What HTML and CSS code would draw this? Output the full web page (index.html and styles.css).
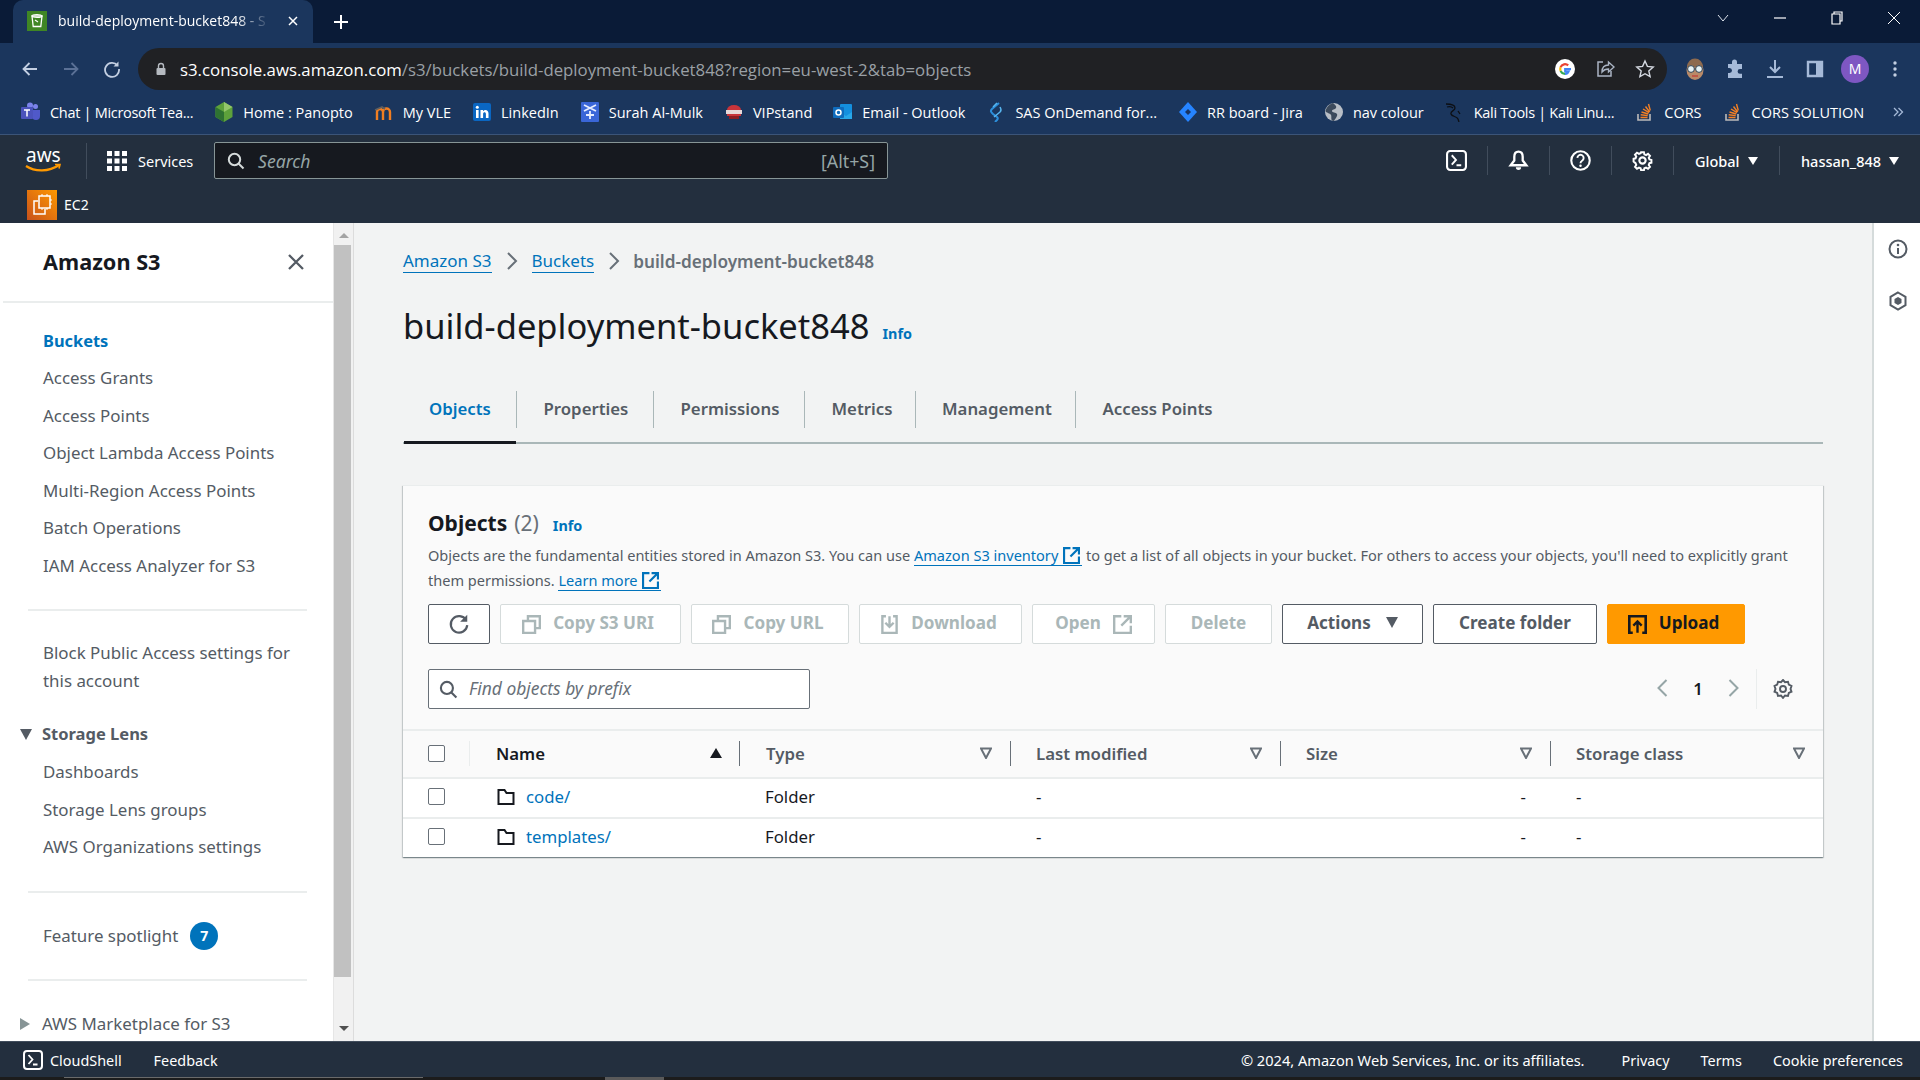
FILE: index.html
```html
<!DOCTYPE html>
<html lang="en">
<head>
  <meta charset="UTF-8">
  <title>build-deployment-bucket848 - S3 bucket</title>
  <link rel="stylesheet" href="styles.css">
</head>
<body>
  <!-- Browser tab strip -->
  <div class="tabstrip">
    <div class="tab-active">
      <svg class="tab-favicon" viewBox="0 0 20 20"><rect width="20" height="20" fill="#3f8624"/><path d="M5 5h10l-1.2 10.5H6.200z" fill="none" stroke="#fff" stroke-width="1.300"/><ellipse cx="10" cy="5" rx="5" ry="1.500" fill="none" stroke="#fff" stroke-width="1.100"/><path d="M8 9l3 2" stroke="#fff" stroke-width="1.200"/></svg>
      <span class="tab-title">build-deployment-bucket848 - S</span>
      <svg class="tab-close" viewBox="0 0 12 12"><path d="M2 2l8 8M10 2l-8 8" stroke="#fff" stroke-width="1.500"/></svg>
    </div>
    <svg class="tab-new" viewBox="0 0 16 16"><path d="M8 1v14M1 8h14" stroke="#fff" stroke-width="2"/></svg>
    <div class="window-controls">
      <svg viewBox="0 0 14 14"><path d="M2 4l5 6 5-6" fill="none" stroke="#dfe5ee" stroke-width="1"/></svg>
      <svg viewBox="0 0 14 14"><path d="M1 7h12" stroke="#fff" stroke-width="1.200"/></svg>
      <svg viewBox="0 0 14 14"><path d="M4 3V1h8v9h-2M2 3h8v10H2z" fill="none" stroke="#fff" stroke-width="1.200"/></svg>
      <svg viewBox="0 0 14 14"><path d="M1 1l12 12M13 1L1 13" stroke="#fff" stroke-width="1"/></svg>
    </div>
  </div>

  <!-- Address bar -->
  <div class="toolbar">
    <div class="nav-buttons">
      <svg viewBox="0 0 18 18"><path d="M16 9H3M8.500 3L2.500 9l6 6" fill="none" stroke="#c3cfe2" stroke-width="1.800"/></svg>
      <svg viewBox="0 0 18 18"><path d="M2 9h13M9.500 3l6 6-6 6" fill="none" stroke="#5b7196" stroke-width="1.800"/></svg>
      <svg viewBox="0 0 18 18"><path d="M14.500 5.500A7 7 0 1 0 16 9" fill="none" stroke="#c3cfe2" stroke-width="1.800"/><path d="M15.500 1.500v5h-5z" fill="#c3cfe2"/></svg>
    </div>
    <div class="urlbar">
      <svg class="lock" viewBox="0 0 12 14"><path d="M3.500 6V4a2.500 2.500 0 0 1 5 0v2" fill="none" stroke="#b5bac0" stroke-width="1.400"/><rect x="1.500" y="6" width="9" height="7" rx="1" fill="#b5bac0"/></svg>
      <span class="url-text"><span class="url-host">s3.console.aws.amazon.com</span>/s3/buckets/build-deployment-bucket848?region=eu-west-2&amp;tab=objects</span>
      <div class="url-icons">
        <svg viewBox="0 0 20 20"><circle cx="10" cy="10" r="10" fill="#fff"/><path d="M16 10.200H10.200v2.300h3.300a3.600 3.600 0 0 1-3.500 2.300" fill="none" stroke="#4285f4" stroke-width="2.200"/><path d="M10 14.800a4.800 4.800 0 0 1-4.400-2.900" fill="none" stroke="#34a853" stroke-width="2.200"/><path d="M5.600 11.900a4.900 4.900 0 0 1 0-3.800" fill="none" stroke="#fbbc05" stroke-width="2.200"/><path d="M5.600 8.100A4.800 4.800 0 0 1 13.200 6.400" fill="none" stroke="#ea4335" stroke-width="2.200"/></svg>
        <svg viewBox="0 0 20 20"><path d="M8 3H3v14h13v-5" fill="none" stroke="#aab4c4" stroke-width="1.500"/><path d="M7 13c0-5 3-7 6.500-7V3L19 8l-5.500 5V10C10.500 10 8.500 11 7 13z" fill="none" stroke="#aab4c4" stroke-width="1.400"/></svg>
        <svg viewBox="0 0 20 20"><path d="M10 2l2.400 5.400 5.800.6-4.400 3.900 1.300 5.700L10 14.700l-5.100 2.900 1.300-5.700L1.800 8l5.800-.6z" fill="none" stroke="#d5dae2" stroke-width="1.400"/></svg>
      </div>
    </div>
    <div class="ext-icons">
      <svg class="avatar" viewBox="0 0 20 24"><ellipse cx="10" cy="13" rx="8.500" ry="10" fill="#b98a68"/><path d="M2 10a8 8.500 0 0 1 16 0z" fill="#8e6a4e"/><circle cx="6" cy="12" r="3.400" fill="#e7f2f4" stroke="#30404f"/><circle cx="14" cy="12" r="3.400" fill="#e7f2f4" stroke="#30404f"/><path d="M7 19h6" stroke="#c2473d" stroke-width="1.500"/></svg>
      <svg viewBox="0 0 20 20"><path d="M7 3a2.500 2.500 0 0 1 5 0v2h5v5h-2a2.300 2.300 0 0 0 0 4.800h2V19H3v-5h1.500a2.500 2.500 0 0 0 0-5H3V5h4z" fill="#a6bad8"/></svg>
      <svg viewBox="0 0 20 20"><path d="M10 1v11M5 8l5 5 5-5M2 18h16" fill="none" stroke="#a6bad8" stroke-width="2"/></svg>
      <svg viewBox="0 0 20 20"><path d="M3 3h14v14H3z" fill="none" stroke="#a6bad8" stroke-width="2.400"/><path d="M11 3h6v14h-6z" fill="#a6bad8"/></svg>
      <div class="profile">M</div>
      <svg viewBox="0 0 20 20"><circle cx="10" cy="4" r="1.700" fill="#c3cfe2"/><circle cx="10" cy="10" r="1.700" fill="#c3cfe2"/><circle cx="10" cy="16" r="1.700" fill="#c3cfe2"/></svg>
    </div>
  </div>

  <!-- Bookmarks -->
  <div class="bookmarks">
    <a class="bookmark tight"><svg viewBox="0 0 20 20"><circle cx="14.500" cy="4.500" r="2.500" fill="#7b83eb"/><circle cx="9" cy="3.500" r="3" fill="#7b83eb"/><path d="M11 8h8v6a4 4 0 0 1-8 0z" fill="#5059c9"/><rect y="5" width="12" height="12" rx="1" fill="#4b53bc"/><path d="M3 8h6M6 8v6.500" stroke="#fff" stroke-width="1.500"/></svg>Chat | Microsoft Tea...</a>
    <a class="bookmark"><svg viewBox="0 0 20 20"><path d="M10 0l8.500 5v10L10 20l-8.500-5V5z" fill="#5da13b"/><path d="M10 0v10l8.500-5z" fill="#93c66a"/><path d="M10 10v10l-8.500-5V5z" fill="#2e7232"/></svg>Home : Panopto</a>
    <a class="bookmark"><svg viewBox="0 0 20 20"><path d="M3 18V10a3 3 0 0 1 6 0v8M9 10a3.500 3.500 0 0 1 7 0v8" fill="none" stroke="#f17e21" stroke-width="2.400"/><path d="M1 8l7-3 3 2" fill="none" stroke="#5c5f62" stroke-width="1.600"/></svg>My VLE</a>
    <a class="bookmark"><svg viewBox="0 0 20 20"><rect x="1" y="1" width="18" height="18" rx="2" fill="#0a66c2"/><rect x="4" y="8" width="2.600" height="8" fill="#fff"/><circle cx="5.300" cy="5.300" r="1.500" fill="#fff"/><path d="M8.500 16V8H11v1.200c1.800-2.200 5.500-1.600 5.500 2.300V16h-2.600v-4c0-2.200-2.800-2.200-2.800 0v4z" fill="#fff"/></svg>LinkedIn</a>
    <a class="bookmark"><svg viewBox="0 0 20 20"><rect x="1" y="0" width="18" height="20" rx="1" fill="#3a66d8"/><path d="M4 3l12 6M16 3L4 9M10 9v8M6 13h8" stroke="#e6edff" stroke-width="1.800"/></svg>Surah Al-Mulk</a>
    <a class="bookmark"><svg viewBox="0 0 20 20"><path d="M3 8a7 5 0 0 1 14 0v6H3z" fill="#c8343a"/><rect x="2" y="8" width="16" height="4" fill="#e7d9d9"/><path d="M5 14h10v3H5z" fill="#8c1d22"/></svg>VIPstand</a>
    <a class="bookmark"><svg viewBox="0 0 20 20"><rect x="7" y="2" width="12" height="15" rx="1" fill="#1490df"/><path d="M7 10l6 4 6-4v7H7z" fill="#28a8ea"/><rect y="5" width="11" height="11" rx="1" fill="#0f6cbd"/><circle cx="5.500" cy="10.500" r="2.500" fill="none" stroke="#fff" stroke-width="1.500"/></svg>Email - Outlook</a>
    <a class="bookmark"><svg viewBox="0 0 20 20"><path d="M13 1L6 7c-2 2-1 3 1 5l4 3c1 1 1 2 0 3l-2 2" fill="none" stroke="#2c8fdb" stroke-width="2"/><path d="M11 1L7 5M14 5c1 2 2 3 0 5l-6 5" fill="none" stroke="#57b5ee" stroke-width="1.500"/></svg>SAS OnDemand for...</a>
    <a class="bookmark"><svg viewBox="0 0 20 20"><path d="M10 0l9 10-9 10-9-10z" fill="#2684ff"/><path d="M10 7l3 3-3 3-3-3z" fill="#19335f"/></svg>RR board - Jira</a>
    <a class="bookmark"><svg viewBox="0 0 20 20"><circle cx="10" cy="10" r="9" fill="#b8bec6"/><path d="M9 1c2 2 4 3 3 5S8 7 8 9s4 1 5 3-2 5-3 7c-4 0-2-4-3-6S2 11 1.500 9C3 4 6 2 9 1z" fill="#3c4a5c"/></svg>nav colour</a>
    <a class="bookmark tight"><svg viewBox="0 0 20 20"><path d="M1 2c5 0 9 1 9 4s-5 3-4 6 6 2 7 5l1 3M2 5c3-1 5 0 6 1M13 9l2 3" fill="none" stroke="#0c0f14" stroke-width="1.300"/></svg>Kali Tools | Kali Linu...</a>
    <a class="bookmark"><svg viewBox="0 0 20 20"><path d="M3 12v6h12v-6" fill="none" stroke="#bcbbbb" stroke-width="1.600"/><path d="M5.500 15.500h7M5.700 12.800l7 .8M6.500 10l6.800 2M8 7l6 3.600M10.500 4.500l4.200 5.500M13.500 2l1.800 6.500" stroke="#f48024" stroke-width="1.400"/></svg>CORS</a>
    <a class="bookmark"><svg viewBox="0 0 20 20"><path d="M3 12v6h12v-6" fill="none" stroke="#bcbbbb" stroke-width="1.600"/><path d="M5.500 15.500h7M5.700 12.800l7 .8M6.500 10l6.800 2M8 7l6 3.600M10.500 4.500l4.200 5.500M13.500 2l1.800 6.500" stroke="#f48024" stroke-width="1.400"/></svg>CORS SOLUTION</a>
    <svg class="more" viewBox="0 0 12 12"><path d="M2 2l4 4-4 4M6.500 2l4 4-4 4" fill="none" stroke="#a6bad8" stroke-width="1.300"/></svg>
  </div>

  <!-- AWS console header -->
  <header class="aws-header">
    <div class="aws-row">
      <div class="aws-logo">
        <svg viewBox="0 0 38 36"><text x="1" y="19" class="aws-word">aws</text><path d="M1 23c9 6 23 6 33-1" fill="none" stroke="#ff9900" stroke-width="2.200"/><path d="M30 21.500l5 0-1 4" fill="none" stroke="#ff9900" stroke-width="1.600"/></svg>
      </div>
      <div class="services">
        <svg viewBox="0 0 20 20"><g fill="#fff"><rect width="5" height="5"/><rect x="7.500" width="5" height="5"/><rect x="15" width="5" height="5"/><rect y="7.500" width="5" height="5"/><rect x="7.500" y="7.500" width="5" height="5"/><rect x="15" y="7.500" width="5" height="5"/><rect y="15" width="5" height="5"/><rect x="7.500" y="15" width="5" height="5"/><rect x="15" y="15" width="5" height="5"/></g></svg>
        <span>Services</span>
      </div>
      <div class="aws-search">
        <svg viewBox="0 0 18 18"><circle cx="7.500" cy="7.500" r="5.700" fill="none" stroke="#d5dbdb" stroke-width="2"/><path d="M11.500 11.500l5 5" stroke="#d5dbdb" stroke-width="2"/></svg>
        <span class="search-hint">Search</span>
        <span class="search-key">[Alt+S]</span>
      </div>
      <div class="aws-actions">
        <div class="aws-action">
          <svg viewBox="0 0 20 20"><rect x="1" y="1" width="18" height="18" rx="3" fill="none" stroke="#fff" stroke-width="2"/><path d="M5.500 5l4 4.500-4 4.500M10 14.500h4.500" fill="none" stroke="#fff" stroke-width="1.800"/></svg>
        </div>
        <div class="aws-action">
          <svg viewBox="0 0 20 20"><path d="M10 1.500c-3 0-4 2.500-4 5v3.500L2.500 14.500h15L14 10V6.500c0-2.500-1-5-4-5z" fill="none" stroke="#fff" stroke-width="2.200"/><path d="M7.500 16.500a2.500 2.500 0 0 0 5 0z" fill="#fff"/></svg>
        </div>
        <div class="aws-action">
          <svg viewBox="0 0 20 20"><circle cx="10" cy="10" r="8.800" fill="none" stroke="#fff" stroke-width="2"/><path d="M7 7.500a3 3 0 1 1 4.500 2.700c-1 .6-1.500 1-1.500 2.300" fill="none" stroke="#fff" stroke-width="1.800"/><circle cx="10" cy="15" r="1.200" fill="#fff"/></svg>
        </div>
        <div class="aws-action">
          <svg viewBox="0 0 20 20"><path d="M8.400 1h3.200l.5 2.500 1.900.8 2.200-1.400 2.200 2.200-1.400 2.200.8 1.900 2.200.5v3.200l-2.200.5-.8 1.900 1.400 2.200-2.200 2.200-2.200-1.400-1.900.8-.5 2.200H8.400l-.5-2.200-1.900-.8-2.200 1.400-2.200-2.200 1.400-2.200-.8-1.900L0 11.600V8.400l2.200-.5.8-1.900-1.400-2.200 2.200-2.200L6 3l1.900-.8z" transform="translate(1.500 1.200) scale(.85)" fill="none" stroke="#fff" stroke-width="2.200"/><circle cx="10" cy="10" r="3" fill="none" stroke="#fff" stroke-width="2"/></svg>
        </div>
        <div class="aws-menu region">Global<i class="caret-white"></i></div>
        <div class="aws-menu user">hassan_848<i class="caret-white"></i></div>
      </div>
    </div>
    <div class="aws-row-fav">
      <svg viewBox="0 0 30 30"><defs><linearGradient id="ec2" x1="0" y1="1" x2="1" y2="0"><stop offset="0" stop-color="#c8511b"/><stop offset="1" stop-color="#ff9900"/></linearGradient></defs><rect width="30" height="30" fill="url(#ec2)"/><rect x="12" y="6" width="11" height="12" fill="none" stroke="#fff" stroke-width="1.500"/><path d="M11 11H7v13h11v-5" fill="none" stroke="#fff" stroke-width="1.500"/><path d="M15 4v2M20 4v2M15 18v2M20 18v2M23 10h2M23 14h2" stroke="#fff" stroke-width="1"/></svg>
      <span>EC2</span>
    </div>
  </header>

  <div class="console">
    <!-- Side navigation -->
    <aside class="sidebar">
      <div class="side-head">
        <h2>Amazon S3</h2>
        <svg viewBox="0 0 18 18"><path d="M2 2l14 14M16 2L2 16" stroke="#545b64" stroke-width="2.300"/></svg>
      </div>
      <nav class="side-group first">
        <a class="active">Buckets</a>
        <a>Access Grants</a>
        <a>Access Points</a>
        <a>Object Lambda Access Points</a>
        <a>Multi-Region Access Points</a>
        <a>Batch Operations</a>
        <a>IAM Access Analyzer for S3</a>
      </nav>
      <hr class="side-rule rule-one">
      <a class="side-wrap">Block Public Access settings for this account</a>
      <div class="side-section">
        <i class="tri-down"></i>Storage Lens
      </div>
      <nav class="side-group">
        <a>Dashboards</a>
        <a>Storage Lens groups</a>
        <a>AWS Organizations settings</a>
      </nav>
      <hr class="side-rule rule-two">
      <div class="spotlight">Feature spotlight <span class="badge">7</span></div>
      <hr class="side-rule rule-three">
      <div class="side-section plain">
        <i class="tri-right"></i>AWS Marketplace for S3
      </div>
    </aside>
    <div class="side-scroll">
      <i class="arrow-up"></i>
      <div class="thumb"></div>
      <i class="arrow-down"></i>
    </div>

    <!-- Bucket page -->
    <main class="main">
      <div class="crumbs">
        <a>Amazon S3</a>
        <svg viewBox="0 0 12 20"><path d="M2 2l8 8-8 8" fill="none" stroke="#687078" stroke-width="2"/></svg>
        <a>Buckets</a>
        <svg viewBox="0 0 12 20"><path d="M2 2l8 8-8 8" fill="none" stroke="#687078" stroke-width="2"/></svg>
        <span>build-deployment-bucket848</span>
      </div>
      <div class="page-title">
        <h1>build-deployment-bucket848</h1>
        <a class="info">Info</a>
      </div>
      <div class="tabs">
        <a class="tab selected">Objects</a>
        <a class="tab">Properties</a>
        <a class="tab">Permissions</a>
        <a class="tab">Metrics</a>
        <a class="tab">Management</a>
        <a class="tab last">Access Points</a>
      </div>

      <section class="card">
        <div class="card-head">
          <div class="card-title">
            <h2>Objects</h2> <span class="count">(2)</span> <a class="info">Info</a>
          </div>
          <p class="card-desc">Objects are the fundamental entities stored in Amazon S3. You can use <a>Amazon S3 inventory <svg viewBox="0 0 16 16"><use href="#ext"/></svg></a> to get a list of all objects in your bucket. For others to access your objects, you'll need to explicitly grant<br>them permissions. <a>Learn more <svg viewBox="0 0 16 16"><use href="#ext"/></svg></a></p>
          <div class="btn-row">
            <button class="btn refresh"><svg viewBox="0 0 20 20"><path d="M16.500 6.500A7.500 7.500 0 1 0 17.500 11" fill="none" stroke="#545b64" stroke-width="2"/><path d="M17.500 1.500v6.500H11z" fill="#545b64"/></svg></button>
            <button class="btn off w-s3"><svg viewBox="0 0 16 16"><use href="#copy"/></svg>Copy S3 URI</button>
            <button class="btn off w-url"><svg viewBox="0 0 16 16"><use href="#copy"/></svg>Copy URL</button>
            <button class="btn off w-down"><svg viewBox="0 0 16 16"><path d="M5 1H2v14h12V1h-3" fill="none" stroke="#aab7b8" stroke-width="2"/><path d="M8 1v8M4.500 6.500L8 10l3.500-3.500" fill="none" stroke="#aab7b8" stroke-width="2"/></svg>Download</button>
            <button class="btn off w-open">Open<svg class="after" viewBox="0 0 16 16"><path d="M7 1H1v14h14V9M9 1h6v6M15 1L7 9" fill="none" stroke="#aab7b8" stroke-width="2"/></svg></button>
            <button class="btn off w-del">Delete</button>
            <button class="btn w-act">Actions<i class="tri-down small"></i></button>
            <button class="btn w-new">Create folder</button>
            <button class="btn primary w-up"><svg viewBox="0 0 16 16"><path d="M4 15H1V1h14v14h-3" fill="none" stroke="#16191f" stroke-width="2.400"/><path d="M8 15V6M4.500 9L8 5.500 11.500 9" fill="none" stroke="#16191f" stroke-width="2"/></svg>Upload</button>
          </div>
          <div class="filter-row">
            <div class="filter">
              <svg viewBox="0 0 18 18"><circle cx="7.500" cy="7.500" r="5.700" fill="none" stroke="#545b64" stroke-width="2"/><path d="M11.500 11.500l5 5" stroke="#545b64" stroke-width="2"/></svg>
              <span>Find objects by prefix</span>
            </div>
            <div class="pager">
              <svg viewBox="0 0 12 20"><path d="M10 2L2 10l8 8" fill="none" stroke="#95a5a6" stroke-width="2"/></svg>
              <span>1</span>
              <svg viewBox="0 0 12 20"><path d="M2 2l8 8-8 8" fill="none" stroke="#95a5a6" stroke-width="2"/></svg>
            </div>
            <div class="prefs">
              <svg viewBox="0 0 20 20"><path d="M10 1l2 2.200 3-.4.800 2.900 2.700 1.300-1 2.900 1 2.800-2.700 1.300-.8 2.900-3-.4-2 2.400-2-2.400-3 .4-.8-2.900-2.700-1.300 1-2.800-1-2.900 2.700-1.300.8-2.900 3 .4z" fill="none" stroke="#545b64" stroke-width="1.900"/><circle cx="10" cy="10" r="3" fill="none" stroke="#545b64" stroke-width="1.900"/></svg>
            </div>
          </div>
        </div>

        <div class="grid grid-head">
          <div class="cell check-cell"><i class="check"></i></div>
          <div class="cell col-head sorted">Name<i class="sort-up"></i></div>
          <div class="cell col-head col-type">Type<svg viewBox="0 0 12 12"><use href="#filter"/></svg></div>
          <div class="cell col-head">Last modified<svg viewBox="0 0 12 12"><use href="#filter"/></svg></div>
          <div class="cell col-head">Size<svg viewBox="0 0 12 12"><use href="#filter"/></svg></div>
          <div class="cell col-head end">Storage class<svg viewBox="0 0 12 12"><use href="#filter"/></svg></div>
        </div>
        <div class="grid grid-row">
          <div class="cell check-cell"><i class="check"></i></div>
          <div class="cell name-cell"><svg viewBox="0 0 18 18"><use href="#folder"/></svg><a>code/</a></div>
          <div class="cell">Folder</div>
          <div class="cell">-</div>
          <div class="cell num">-</div>
          <div class="cell">-</div>
        </div>
        <div class="grid grid-row">
          <div class="cell check-cell"><i class="check"></i></div>
          <div class="cell name-cell"><svg viewBox="0 0 18 18"><use href="#folder"/></svg><a>templates/</a></div>
          <div class="cell">Folder</div>
          <div class="cell">-</div>
          <div class="cell num">-</div>
          <div class="cell">-</div>
        </div>
      </section>
    </main>

    <!-- Tools rail -->
    <aside class="rail">
      <svg viewBox="0 0 20 20"><circle cx="10" cy="10" r="8.500" fill="none" stroke="#545b64" stroke-width="2"/><path d="M10 9v6" stroke="#545b64" stroke-width="2"/><circle cx="10" cy="6" r="1.300" fill="#545b64"/></svg>
      <svg viewBox="0 0 20 20"><path d="M10 1.500l7.500 4.300v8.400L10 18.500l-7.500-4.300V5.800z" fill="none" stroke="#545b64" stroke-width="2"/><path d="M10 6l3.500 2v4L10 14l-3.500-2V8z" fill="#545b64"/></svg>
    </aside>
  </div>

  <footer class="aws-footer">
    <svg viewBox="0 0 20 20"><rect x="1" y="1" width="18" height="18" rx="3" fill="none" stroke="#fff" stroke-width="2"/><path d="M5.500 5l4 4.500-4 4.500M10 14.500h4.500" fill="none" stroke="#fff" stroke-width="1.800"/></svg>
    <a class="shell">CloudShell</a>
    <a class="feedback">Feedback</a>
    <span class="copyright">© 2024, Amazon Web Services, Inc. or its affiliates.</span>
    <a class="foot-link privacy">Privacy</a>
    <a class="foot-link">Terms</a>
    <a class="foot-link">Cookie preferences</a>
  </footer>
  <div class="taskbar"><i class="task-one"></i><i class="task-two"></i></div>

  <!-- Shared icons -->
  <svg class="defs" aria-hidden="true">
    <symbol id="ext" viewBox="0 0 16 16"><path d="M7 1H1v14h14V9M9 1h6v6M15 1L7 9" fill="none" stroke="#0073bb" stroke-width="2"/></symbol>
    <symbol id="copy" viewBox="0 0 16 16"><path d="M5 4V1h10v10h-3M1 5h10v10H1z" fill="none" stroke="#aab7b8" stroke-width="2"/></symbol>
    <symbol id="filter" viewBox="0 0 12 12"><path d="M1 1.500h10L6 11z" fill="none" stroke="#687078" stroke-width="2"/></symbol>
    <symbol id="folder" viewBox="0 0 18 18"><path d="M1.500 2h6l2 3h7v11h-15z" fill="none" stroke="#16191f" stroke-width="2"/></symbol>
  </svg>
</body>
</html>
```

FILE: styles.css
```css
* {
  box-sizing: border-box;
}

html, body {
  height: 1080px;
}

body {
  margin: 0;
  overflow: hidden;
  display: flex;
  flex-direction: column;
  font-family: "Noto Sans", Arial, sans-serif;
  color: #16191f;
  background-color: #f2f3f3;
}

a {
  color: inherit;
  text-decoration: none;
}

h1, h2, p {
  margin: 0;
  font-weight: normal;
}

/* Browser chrome */
.tabstrip {
  height: 43px;
  flex: none;
  display: flex;
  align-items: flex-end;
  background-color: #0a1b37;
  padding-left: 13px;
}

.tab-active {
  width: 300px;
  height: 43px;
  display: flex;
  align-items: center;
  padding: 0 14px 2px;
  background-color: #1b365d;
  border-radius: 10px 10px 0 0;
  color: #fff;
  font-family: "Open Sans", Arial, sans-serif;
  font-size: 14px;
}

.tab-favicon {
  width: 20px;
  height: 20px;
  flex: none;
}

.tab-title {
  margin-left: 11px;
  width: 217px;
  white-space: nowrap;
  -webkit-mask-image: linear-gradient(to right, #000 82%, transparent 98%);
  mask-image: linear-gradient(to right, #000 82%, transparent 98%);
}

.tab-close {
  width: 12px;
  height: 12px;
  margin-left: 12px;
  flex: none;
}

.tab-new {
  width: 16px;
  height: 16px;
  margin: 0 0 13px 20px;
}

.window-controls {
  margin-left: auto;
  display: flex;
  gap: 43px;
  padding: 0 19px 18px 0;
}

.window-controls svg {
  width: 14px;
  height: 14px;
}

.toolbar {
  height: 51px;
  flex: none;
  display: flex;
  align-items: flex-start;
  background-color: #1b365d;
  padding-top: 5px;
}

.nav-buttons {
  width: 138px;
  height: 42px;
  flex: none;
  display: flex;
  align-items: center;
  gap: 23px;
  padding-left: 21px;
}

.nav-buttons svg {
  width: 18px;
  height: 18px;
}

.urlbar {
  width: 1529px;
  height: 42px;
  flex: none;
  display: flex;
  align-items: center;
  border-radius: 21px;
  background-color: #202124;
  padding-left: 17px;
  color: #9aa0a6;
  font-family: "Open Sans", Arial, sans-serif;
  font-size: 16.800px;
}

.lock {
  width: 12px;
  height: 14px;
  flex: none;
}

.url-text {
  margin: 1px 0 0 13px;
  white-space: nowrap;
}

.url-host {
  color: #fff;
}

.url-icons {
  margin-left: auto;
  display: flex;
  gap: 20px;
  padding-right: 12px;
}

.url-icons svg {
  width: 20px;
  height: 20px;
}

.ext-icons {
  height: 42px;
  display: flex;
  align-items: center;
  gap: 20px;
  padding-left: 18px;
}

.ext-icons svg {
  width: 20px;
  height: 20px;
}

.ext-icons svg.avatar {
  height: 24px;
}

.profile {
  width: 28px;
  height: 28px;
  margin: 0 -4px;
  border-radius: 50%;
  background-color: #7e57c2;
  color: #fff;
  font-size: 14px;
  line-height: 28px;
  text-align: center;
}

.bookmarks {
  height: 41px;
  flex: none;
  display: flex;
  align-items: center;
  gap: 21px;
  padding: 0 16px 4px 21px;
  background-color: #1b365d;
  border-bottom: 1px solid #3b5478;
  color: #fff;
  font-family: "Open Sans", Arial, sans-serif;
  font-size: 14.500px;
  white-space: nowrap;
}

.bookmark {
  display: flex;
  align-items: center;
  gap: 9px;
}

.bookmark.tight {
  letter-spacing: -0.3px;
}

.bookmark svg {
  width: 20px;
  height: 20px;
}

.more {
  width: 12px;
  height: 12px;
  margin-left: auto;
}

/* AWS console header */
.aws-header {
  height: 88px;
  flex: none;
  background-color: #232f3e;
  color: #fff;
  font-size: 14.500px;
}

.aws-row {
  height: 51px;
  display: flex;
  align-items: center;
}

.aws-logo {
  width: 87px;
  height: 36px;
  flex: none;
  padding-left: 25px;
  border-right: 1px solid #414d5c;
}

.aws-logo svg {
  width: 38px;
  height: 36px;
}

.aws-word {
  font-size: 19px;
  fill: #fff;
}

.services {
  width: 127px;
  flex: none;
  display: flex;
  align-items: center;
  gap: 11px;
  padding-left: 20px;
}

.services svg {
  width: 20px;
  height: 20px;
}

.aws-search {
  width: 674px;
  height: 37px;
  flex: none;
  display: flex;
  align-items: center;
  padding: 0 12px;
  background-color: #16191f;
  border: 1px solid #879596;
  border-radius: 2px;
}

.aws-search svg {
  width: 18px;
  height: 18px;
}

.search-hint {
  margin-left: 13px;
  color: #95a5a6;
  font-style: italic;
  font-size: 17.600px;
}

.search-key {
  margin-left: auto;
  color: #95a5a6;
  font-size: 17.800px;
}

.aws-actions {
  margin-left: auto;
  height: 100%;
  display: flex;
  align-items: center;
}

.aws-action {
  width: 62px;
  height: 29px;
  display: flex;
  align-items: center;
  justify-content: center;
  border-right: 1px solid #414d5c;
}

.aws-action svg {
  width: 21px;
  height: 21px;
}

.aws-menu {
  height: 29px;
  display: flex;
  align-items: center;
  font-weight: 500;
}

.region {
  width: 106px;
  padding-left: 21px;
  border-right: 1px solid #414d5c;
}

.user {
  width: 140px;
  padding-left: 21px;
}

.caret-white {
  width: 0;
  height: 0;
  margin-left: 8px;
  border-left: 5.500px solid transparent;
  border-right: 5.500px solid transparent;
  border-top: 8px solid #fff;
}

.aws-row-fav {
  height: 37px;
  display: flex;
  align-items: center;
  gap: 7px;
  padding-left: 27px;
  font-size: 14px;
}

.aws-row-fav svg {
  width: 30px;
  height: 30px;
}

/* Console body */
.console {
  flex: 1;
  min-height: 0;
  display: flex;
}

.sidebar {
  width: 333px;
  flex: none;
  overflow: hidden;
  background-color: #fff;
  color: #545b64;
  font-size: 16.900px;
}

.side-head {
  height: 80px;
  display: flex;
  align-items: center;
  justify-content: space-between;
  margin-left: 3px;
  padding: 0 28px 0 40px;
  border-bottom: 2px solid #eaeded;
}

.side-head h2 {
  margin-bottom: 2px;
  color: #16191f;
  font-size: 21.700px;
  font-weight: 700;
}

.side-head svg {
  width: 18px;
  height: 18px;
}

.side-group {
  padding-left: 43px;
}

.side-group.first {
  padding-top: 18.500px;
}

.side-group a {
  display: block;
  height: 37.500px;
  line-height: 37.500px;
  white-space: nowrap;
}

.side-group a.active {
  color: #0073bb;
  font-size: 16.400px;
  font-weight: 700;
}

.side-rule {
  margin: 0 26px 0 28px;
  border: 0;
  border-top: 2px solid #eaeded;
}

.rule-one {
  margin-top: 25px;
}

.rule-two {
  margin-top: 25.500px;
}

.side-wrap {
  display: block;
  width: 270px;
  margin: 28px 0 0 43px;
  line-height: 28px;
}

.side-section {
  height: 38px;
  line-height: 38px;
  margin-top: 20px;
  display: flex;
  align-items: center;
  padding-left: 20px;
  font-size: 16.500px;
  font-weight: 700;
}

.side-section.plain {
  margin-top: 24px;
  font-size: 16.900px;
  font-weight: 400;
}

.tri-down {
  width: 0;
  height: 0;
  margin-right: 10px;
  border-left: 6.500px solid transparent;
  border-right: 6.500px solid transparent;
  border-top: 11px solid #545b64;
}

.tri-down.small {
  margin: 0 0 0 3px;
}

.tri-right {
  width: 0;
  height: 0;
  margin: 0 12px 0 0;
  border-top: 6.500px solid transparent;
  border-bottom: 6.500px solid transparent;
  border-left: 10px solid #879596;
}

.spotlight {
  height: 86px;
  display: flex;
  align-items: center;
  gap: 12px;
  padding: 0 0 1px 43px;
}

.badge {
  width: 28px;
  height: 28px;
  border-radius: 50%;
  background-color: #0073bb;
  color: #fff;
  font-size: 14px;
  font-weight: 700;
  line-height: 28px;
  text-align: center;
}

.side-scroll {
  width: 21px;
  flex: none;
  display: flex;
  flex-direction: column;
  align-items: center;
  background-color: #f1f1f1;
  border-left: 1px solid #e6e6e6;
  border-right: 1px solid #dcdcdc;
}

.thumb {
  align-self: flex-start;
  width: 17px;
  height: 732px;
  margin-top: 7px;
  background-color: #c1c1c1;
}

.arrow-up,
.arrow-down {
  width: 0;
  height: 0;
  border-left: 5px solid transparent;
  border-right: 5px solid transparent;
}

.arrow-up {
  margin-top: 10px;
  border-bottom: 5px solid #a3a3a3;
}

.arrow-down {
  margin-top: 49px;
  border-top: 5px solid #505050;
}

.main {
  width: 1518px;
  flex: none;
  padding: 19px 49px 0;
}

.crumbs {
  height: 38px;
  display: flex;
  align-items: center;
  gap: 14px;
  font-size: 17px;
  color: #687078;
}

.crumbs a {
  color: #0073bb;
  border-bottom: 1px solid #0073bb;
  line-height: 22px;
}

.crumbs svg {
  width: 12px;
  height: 20px;
}

.crumbs span {
  margin-left: -1px;
  font-size: 17.200px;
  font-weight: 600;
}

.page-title {
  margin-top: 21px;
  height: 50px;
  display: flex;
  align-items: center;
  gap: 13px;
}

.page-title h1 {
  font-size: 34.500px;
  line-height: 50px;
}

.info {
  color: #0073bb;
  font-size: 14.400px;
  font-weight: 700;
}

.page-title .info {
  margin-top: 14px;
}

.tabs {
  margin-top: 40px;
  height: 53px;
  display: grid;
  grid-template-columns: 113px 137px 151px 110.500px 160.500px auto;
  padding-left: 1px;
  border-bottom: 2px solid #aab7b8;
}

.tab {
  position: relative;
  height: 37px;
  padding-left: 26.500px;
  border-right: 1px solid #aab7b8;
  color: #545b64;
  font-size: 16.800px;
  font-weight: 600;
  line-height: 36px;
  white-space: nowrap;
}

.tab.last {
  border-right: 0;
}

.tab.selected {
  padding-left: 25px;
  color: #0073bb;
}

.tab.selected::after {
  content: "";
  position: absolute;
  left: 0;
  right: 0;
  bottom: -16px;
  height: 3px;
  background-color: #16191f;
}

.card {
  margin-top: 41px;
  background-color: #fff;
  box-shadow: 0 1px 1px 0 rgba(0, 28, 36, 0.3), 1px 1px 1px 0 rgba(0, 28, 36, 0.15), -1px 1px 1px 0 rgba(0, 28, 36, 0.15);
}

.card-head {
  height: 244px;
  padding: 23px 25px 0;
  background-color: #fafafa;
  border-top: 1px solid #eaeded;
}

.card-title {
  height: 28px;
  display: flex;
  align-items: center;
  gap: 7px;
}

.card-title h2 {
  font-size: 21px;
  font-weight: 700;
}

.count {
  color: #687078;
  font-size: 21px;
}

.card-title .info {
  margin: 4px 0 0 7px;
}

.card-desc {
  margin-top: 6px;
  color: #545b64;
  font-size: 14.550px;
  line-height: 24.500px;
  white-space: nowrap;
}

.card-desc a {
  color: #0073bb;
  border-bottom: 1px solid #0073bb;
}

.card-desc svg {
  width: 17px;
  height: 17px;
  margin: 0 2px 0 1px;
  vertical-align: -3px;
}

.btn-row {
  margin-top: 12px;
  display: flex;
  gap: 10px;
}

.btn {
  height: 40px;
  display: flex;
  align-items: center;
  justify-content: center;
  gap: 12px;
  padding: 0 0 3px;
  background-color: #fff;
  border: 1px solid #545b64;
  border-radius: 2px;
  color: #545b64;
  font-family: inherit;
  font-size: 17.100px;
  font-weight: 700;
}

.btn svg {
  width: 19px;
  height: 19px;
  margin-top: 3px;
}

.btn.off {
  border-color: #d5dbdb;
  color: #aab7b8;
}

.btn.primary {
  background-color: #ff9900;
  border-color: #ff9900;
  color: #16191f;
}

.refresh { width: 62px; }
.refresh svg { width: 22px; height: 22px; }
.w-s3 { width: 181px; padding-right: 5px; }
.w-url { width: 158px; padding-right: 4px; }
.w-down { width: 163px; padding-right: 4px; }
.w-open { width: 123px; }
.w-del { width: 107px; }
.w-act { width: 141px; }
.w-new { width: 164px; }
.w-up { width: 138px; padding-right: 5px; }

.filter-row {
  margin-top: 25px;
  height: 40px;
  display: flex;
  align-items: center;
}

.filter {
  width: 382px;
  height: 40px;
  display: flex;
  align-items: center;
  gap: 11px;
  padding: 0 0 2px 10px;
  background-color: #fff;
  border: 1px solid #687078;
  border-radius: 2px;
  color: #687078;
  font-size: 17.400px;
  font-style: italic;
}

.filter svg {
  width: 19px;
  height: 19px;
  margin-top: 2px;
}

.pager {
  margin-left: auto;
  display: flex;
  align-items: center;
  padding-bottom: 2px;
  font-size: 16.800px;
  font-weight: 600;
}

.pager svg {
  width: 13px;
  height: 20px;
}

.pager span {
  width: 58px;
  text-align: center;
}

.prefs {
  width: 42px;
  height: 40px;
  margin-left: 16px;
  display: flex;
  align-items: center;
  padding-left: 16px;
  border-left: 1px solid #eaeded;
}

.prefs svg {
  width: 20px;
  height: 20px;
}

.grid {
  display: grid;
  grid-template-columns: 67px 270px 271px 270px 270px 272px;
  font-size: 16.800px;
}

.grid-head {
  height: 48px;
  padding-bottom: 2px;
  background-color: #fafafa;
  border-top: 2px solid #eaeded;
}

.grid-row {
  height: 40px;
  padding-bottom: 3px;
  border-top: 2px solid #eaeded;
}

.cell {
  display: flex;
  align-items: center;
  padding-left: 25px;
  min-width: 0;
}

.check {
  width: 17px;
  height: 17px;
  background-color: #fff;
  border: 1px solid #687078;
  border-radius: 2px;
}

.check-cell {
  height: 25px;
  align-self: center;
  border-right: 1px solid #eaeded;
}

.grid-row .check-cell {
  border-right: 0;
}

.col-head {
  height: 25px;
  align-self: center;
  justify-content: space-between;
  padding-right: 18px;
  border-right: 1px solid #687078;
  color: #545b64;
  font-weight: 600;
}

.col-head svg {
  width: 12px;
  height: 12px;
}

.col-head.sorted {
  padding: 0 17px 0 26px;
  color: #16191f;
}

.col-head.col-type {
  padding-left: 26px;
}

.col-head.end {
  border-right: 0;
}

.sort-up {
  width: 0;
  height: 0;
  border-left: 6.500px solid transparent;
  border-right: 6.500px solid transparent;
  border-bottom: 10px solid #16191f;
}

.name-cell {
  padding-left: 27px;
  gap: 11px;
}

.name-cell svg {
  width: 18px;
  height: 18px;
}

.name-cell a {
  color: #0073bb;
}

.num {
  justify-content: flex-end;
  padding: 0 25px 0 0;
}

.rail {
  flex: 1;
  display: flex;
  flex-direction: column;
  align-items: center;
  gap: 32px;
  padding: 16px 0 0 1px;
  background-color: #fff;
  border-left: 2px solid #d5dbdb;
}

.rail svg {
  width: 20px;
  height: 20px;
}

/* Footer */
.aws-footer {
  height: 36px;
  flex: none;
  display: flex;
  align-items: center;
  padding: 1px 17px 0 23px;
  background-color: #232f3e;
  border-top: 1px solid #414d5c;
  color: #fff;
  font-size: 14.400px;
}

.aws-footer svg {
  width: 20px;
  height: 20px;
}

.shell {
  margin-left: 7px;
}

.feedback {
  margin-left: 32px;
}

.copyright {
  margin-left: auto;
  font-size: 14.600px;
}

.foot-link {
  margin-left: 31px;
}

.foot-link.privacy {
  margin-left: 37px;
}

.taskbar {
  height: 3px;
  flex: none;
  display: flex;
  background-color: #1c1c1c;
}

.task-one {
  width: 359px;
  height: 1px;
  margin-left: 64px;
  background-color: #6a6a6a;
}

.task-two {
  width: 59px;
  height: 3px;
  margin-left: 182px;
  background-color: #5a5a5a;
}

.defs {
  position: absolute;
  width: 0;
  height: 0;
}
```
